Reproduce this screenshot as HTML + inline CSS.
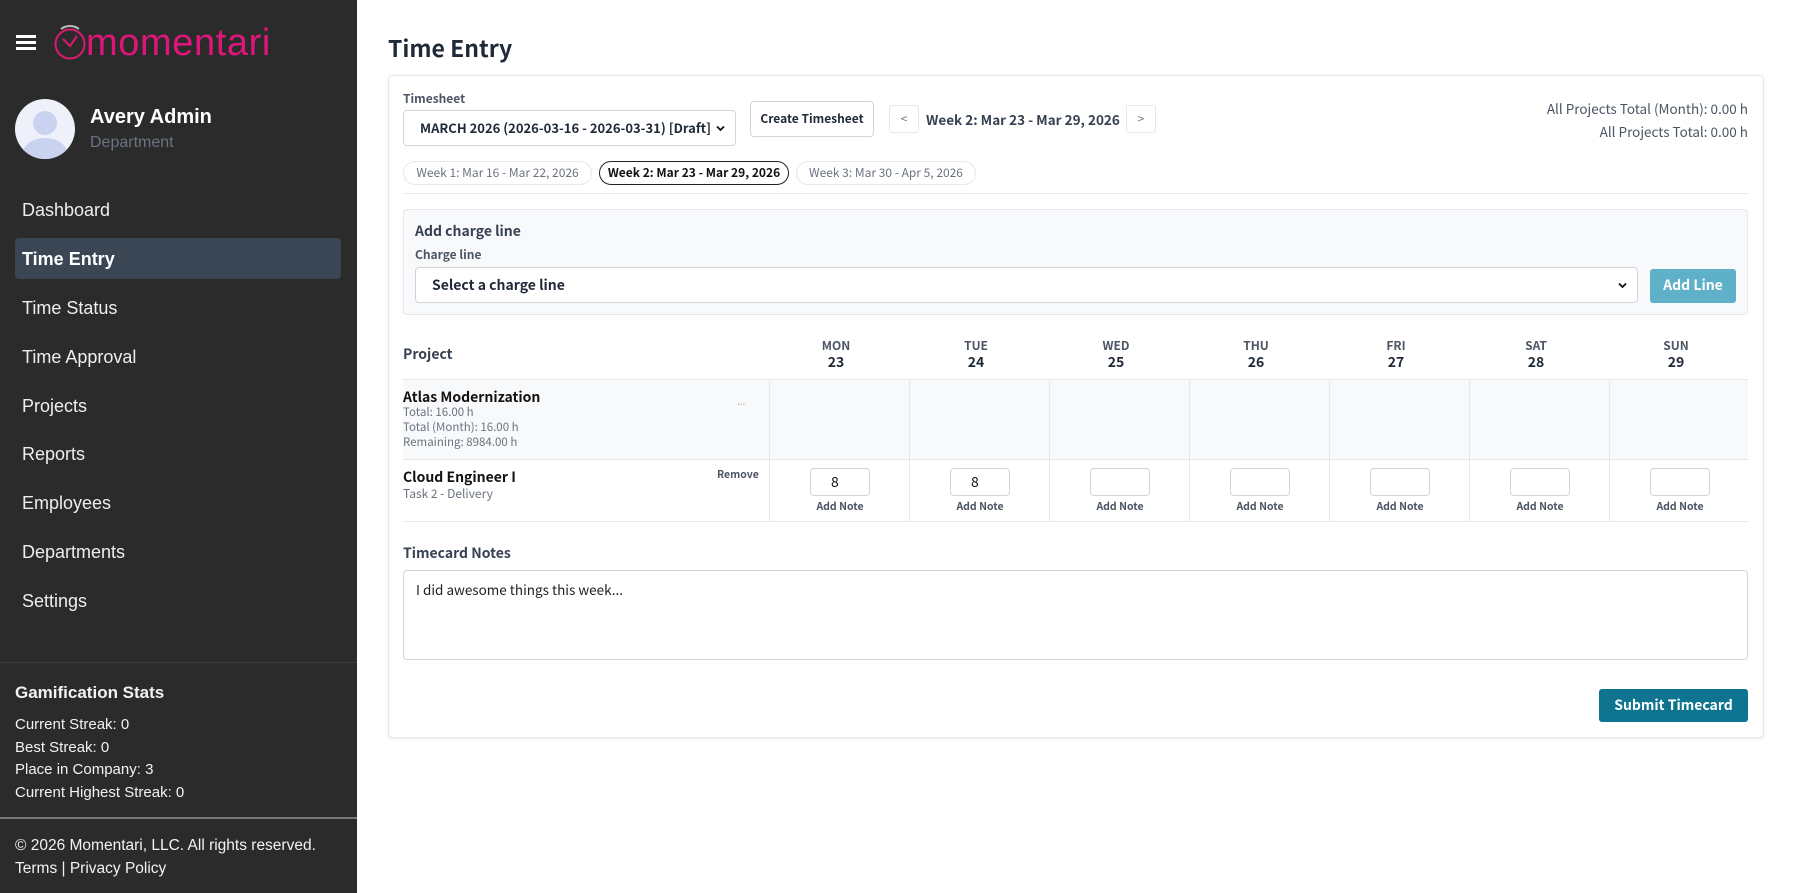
<!DOCTYPE html>
<html><head><meta charset="utf-8"><style>
*{box-sizing:border-box;margin:0;padding:0}
body{width:1794px;height:893px;overflow:hidden;background:#fff;position:relative;font-family:"Liberation Sans","Noto Sans CJK JP",sans-serif}
.a{position:absolute;white-space:nowrap}
#sb{position:absolute;left:0;top:0;width:357px;height:893px;background:#2b2b2b;color:#f2f2f2}
.nav{position:absolute;left:22px;font-size:18px;color:#eee}
.m{font-family:"Noto Sans CJK JP","Liberation Sans",sans-serif}
.c{color:#1f2937}
.g{color:#6b7280}
.pill{position:absolute;top:161px;height:24px;border:1px solid #e5e7eb;border-radius:12px;font-size:12px;color:#6b7280;text-align:center;line-height:22px}
.day{position:absolute;width:140px;text-align:center;color:#4b5563}
.inp{position:absolute;top:468px;width:60px;height:28px;border:1px solid #d1d5db;border-radius:4px;font-size:14px;padding-left:20px;line-height:26px;color:#111}
.an{position:absolute;top:499px;width:140px;text-align:center;font-size:10.5px;font-weight:bold;color:#4b5563}
.vl{position:absolute;width:1px;background:#e5e7eb}
.chev{position:absolute;right:10px;top:14px}
</style></head><body>
<div id="sb">
 <div class="a" style="left:16px;top:35px;width:20px;height:3px;background:#fff;box-shadow:0 6px 0 #fff,0 12px 0 #fff"></div>
 <svg class="a" style="left:53px;top:25px" width="34" height="36" viewBox="0 0 34 36"><circle cx="17" cy="19" r="14.5" fill="none" stroke="#d81b72" stroke-width="2"/><path d="M8 4 A15 15 0 0 1 26 4" fill="none" stroke="#bbb" stroke-width="2"/><path d="M10 14 L17 21 L24 11" fill="none" stroke="#d81b72" stroke-width="2"/></svg>
 <div class="a" style="left:86px;top:22px;font-size:38px;color:#e0157a;letter-spacing:0.6px">momentari</div>
 <div class="a" style="left:15px;top:99px;width:60px;height:60px;border-radius:50%;background:#eef1fa;overflow:hidden">
  <div class="a" style="left:18px;top:12px;width:24px;height:24px;border-radius:50%;background:#c9d3f0"></div>
  <div class="a" style="left:8px;top:39px;width:44px;height:30px;border-radius:50% 50% 0 0;background:#c9d3f0"></div>
 </div>
 <div class="a" style="left:90px;top:106px;font-size:20px;font-weight:bold;color:#fff">Avery Admin</div>
 <div class="a" style="left:90px;top:134px;font-size:16px;color:#6b7280">Department</div>
 <div class="a" style="left:15px;top:238px;width:326px;height:41px;background:#3a4654;border-radius:4px"></div>
 <div class="nav" style="top:200px">Dashboard</div>
 <div class="nav" style="top:249px;font-weight:bold;color:#fff">Time Entry</div>
 <div class="nav" style="top:298px">Time Status</div>
 <div class="nav" style="top:347px">Time Approval</div>
 <div class="nav" style="top:396px">Projects</div>
 <div class="nav" style="top:444px">Reports</div>
 <div class="nav" style="top:493px">Employees</div>
 <div class="nav" style="top:542px">Departments</div>
 <div class="nav" style="top:591px">Settings</div>
 <div class="a" style="left:0;top:662px;width:357px;height:1px;background:#3c3c3c"></div>
 <div class="a" style="left:15px;top:683px;font-size:17px;font-weight:bold">Gamification Stats</div>
 <div class="a" style="left:15px;top:714px;font-size:15px;line-height:22.5px">Current Streak: 0<br>Best Streak: 0<br>Place in Company: 3<br>Current Highest Streak: 0</div>
 <div class="a" style="left:0;top:817px;width:357px;height:2px;background:#777"></div>
 <div class="a" style="left:15px;top:834px;font-size:15.5px;line-height:23px">© 2026 Momentari, LLC. All rights reserved.<br>Terms | Privacy Policy</div>
</div>

<div class="a m c" style="left:388px;top:30px;font-size:23px;font-weight:bold">Time Entry</div>
<div class="a" style="left:388px;top:75px;width:1376px;height:663px;border:1px solid #e5e7eb;border-radius:4px;box-shadow:0 1px 3px rgba(0,0,0,.08)"></div>
<div class="m">
<div class="a g" style="left:403px;top:90px;font-size:12px;font-weight:bold;color:#4b5563">Timesheet</div>
<div class="a c" style="left:403px;top:110px;width:333px;height:36px;border:1px solid #d1d5db;border-radius:4px;font-size:13px;font-weight:bold;padding-left:16px;line-height:34px">MARCH 2026 (2026-03-16 - 2026-03-31) [Draft]<svg class="chev" width="9" height="7" viewBox="0 0 9 7"><path d="M1 1.5 L4.5 5 L8 1.5" fill="none" stroke="#111" stroke-width="1.8"/></svg></div>
<div class="a c" style="left:750px;top:101px;width:124px;height:36px;border:1px solid #d1d5db;border-radius:4px;font-size:12px;font-weight:bold;text-align:center;line-height:34px">Create Timesheet</div>
<div class="a g" style="left:889px;top:105px;width:30px;height:28px;border:1px solid #e5e7eb;border-radius:3px;text-align:center;line-height:26px;font-size:12px">&lt;</div>
<div class="a c" style="left:926px;top:109px;font-size:13.5px;font-weight:bold;color:#374151">Week 2: Mar 23 - Mar 29, 2026</div>
<div class="a g" style="left:1126px;top:105px;width:30px;height:28px;border:1px solid #e5e7eb;border-radius:3px;text-align:center;line-height:26px;font-size:12px">&gt;</div>
<div class="a" style="right:46px;top:97px;font-size:13.5px;color:#4b5563;text-align:right;line-height:23px">All Projects Total (Month): 0.00 h<br>All Projects Total: 0.00 h</div>
<div class="pill" style="left:403px;width:189px">Week 1: Mar 16 - Mar 22, 2026</div>
<div class="pill" style="left:599px;width:190px;border-color:#222;color:#111;font-weight:bold">Week 2: Mar 23 - Mar 29, 2026</div>
<div class="pill" style="left:796px;width:180px">Week 3: Mar 30 - Apr 5, 2026</div>
<div class="a" style="left:403px;top:193px;width:1345px;height:1px;background:#e5e7eb"></div>
<div class="a" style="left:403px;top:209px;width:1345px;height:106px;background:#f8f9fb;border:1px solid #e5e7eb;border-radius:4px"></div>
<div class="a c" style="left:415px;top:221px;font-size:14px;font-weight:bold;color:#374151">Add charge line</div>
<div class="a" style="left:415px;top:246px;font-size:12px;font-weight:bold;color:#4b5563">Charge line</div>
<div class="a c" style="left:415px;top:267px;width:1223px;height:36px;border:1px solid #d1d5db;border-radius:4px;background:#fff;font-size:14px;font-weight:bold;padding-left:16px;line-height:34px">Select a charge line<svg class="chev" width="9" height="7" viewBox="0 0 9 7"><path d="M1 1.5 L4.5 5 L8 1.5" fill="none" stroke="#111" stroke-width="1.8"/></svg></div>
<div class="a" style="left:1650px;top:269px;width:86px;height:34px;background:#5fb0c9;border-radius:3px;color:#fff;font-weight:bold;font-size:14px;text-align:center;line-height:33px">Add Line</div>

<div class="a c" style="left:403px;top:344px;font-size:14px;font-weight:bold;color:#374151">Project</div>
<div class="a" style="left:403px;top:379px;width:1345px;height:1px;background:#e5e7eb"></div>
<div class="a" style="left:403px;top:380px;width:1345px;height:79px;background:#f8f9fb"></div>
<div class="a" style="left:403px;top:459px;width:1345px;height:1px;background:#e5e7eb"></div>
<div class="a" style="left:403px;top:521px;width:1345px;height:1px;background:#e5e7eb"></div>
<div class="a c" style="left:403px;top:387px;font-size:14px;font-weight:bold;color:#111">Atlas Modernization</div>
<div class="a g" style="left:403px;top:405px;font-size:11.5px;line-height:15px">Total: 16.00 h<br>Total (Month): 16.00 h<br>Remaining: 8984.00 h</div>
<div class="a" style="left:737px;top:393px;font-size:10px;color:#aaa">...</div>
<div class="a c" style="left:403px;top:467px;font-size:14px;font-weight:bold;color:#111">Cloud Engineer I</div>
<div class="a g" style="left:403px;top:485px;font-size:12px">Task 2 - Delivery</div>
<div class="a" style="left:717px;top:467px;font-size:10.5px;font-weight:bold;color:#4b5563">Remove</div>
<div class="vl" style="left:769px;top:380px;height:141px"></div>
<div class="vl" style="left:909px;top:380px;height:141px"></div>
<div class="vl" style="left:1049px;top:380px;height:141px"></div>
<div class="vl" style="left:1189px;top:380px;height:141px"></div>
<div class="vl" style="left:1329px;top:380px;height:141px"></div>
<div class="vl" style="left:1469px;top:380px;height:141px"></div>
<div class="vl" style="left:1609px;top:380px;height:141px"></div>

<div class="day" style="left:766px;top:337px;font-size:12px;font-weight:bold;line-height:17px">MON<br><span style="font-size:14px;color:#1f2937">23</span></div>
<div class="day" style="left:906px;top:337px;font-size:12px;font-weight:bold;line-height:17px">TUE<br><span style="font-size:14px;color:#1f2937">24</span></div>
<div class="day" style="left:1046px;top:337px;font-size:12px;font-weight:bold;line-height:17px">WED<br><span style="font-size:14px;color:#1f2937">25</span></div>
<div class="day" style="left:1186px;top:337px;font-size:12px;font-weight:bold;line-height:17px">THU<br><span style="font-size:14px;color:#1f2937">26</span></div>
<div class="day" style="left:1326px;top:337px;font-size:12px;font-weight:bold;line-height:17px">FRI<br><span style="font-size:14px;color:#1f2937">27</span></div>
<div class="day" style="left:1466px;top:337px;font-size:12px;font-weight:bold;line-height:17px">SAT<br><span style="font-size:14px;color:#1f2937">28</span></div>
<div class="day" style="left:1606px;top:337px;font-size:12px;font-weight:bold;line-height:17px">SUN<br><span style="font-size:14px;color:#1f2937">29</span></div>

<div class="inp" style="left:810px">8</div><div class="an" style="left:770px">Add Note</div>
<div class="inp" style="left:950px">8</div><div class="an" style="left:910px">Add Note</div>
<div class="inp" style="left:1090px"></div><div class="an" style="left:1050px">Add Note</div>
<div class="inp" style="left:1230px"></div><div class="an" style="left:1190px">Add Note</div>
<div class="inp" style="left:1370px"></div><div class="an" style="left:1330px">Add Note</div>
<div class="inp" style="left:1510px"></div><div class="an" style="left:1470px">Add Note</div>
<div class="inp" style="left:1650px"></div><div class="an" style="left:1610px">Add Note</div>

<div class="a c" style="left:403px;top:543px;font-size:14px;font-weight:bold;color:#374151">Timecard Notes</div>
<div class="a c" style="left:403px;top:570px;width:1345px;height:90px;border:1px solid #d1d5db;border-radius:4px;font-size:13.5px;padding:8px 12px;color:#222">I did awesome things this week...</div>
<div class="a" style="left:1599px;top:689px;width:149px;height:33px;background:#0e7490;border-radius:3px;color:#fff;font-weight:bold;font-size:14px;text-align:center;line-height:32px">Submit Timecard</div>
</div>
</body></html>
